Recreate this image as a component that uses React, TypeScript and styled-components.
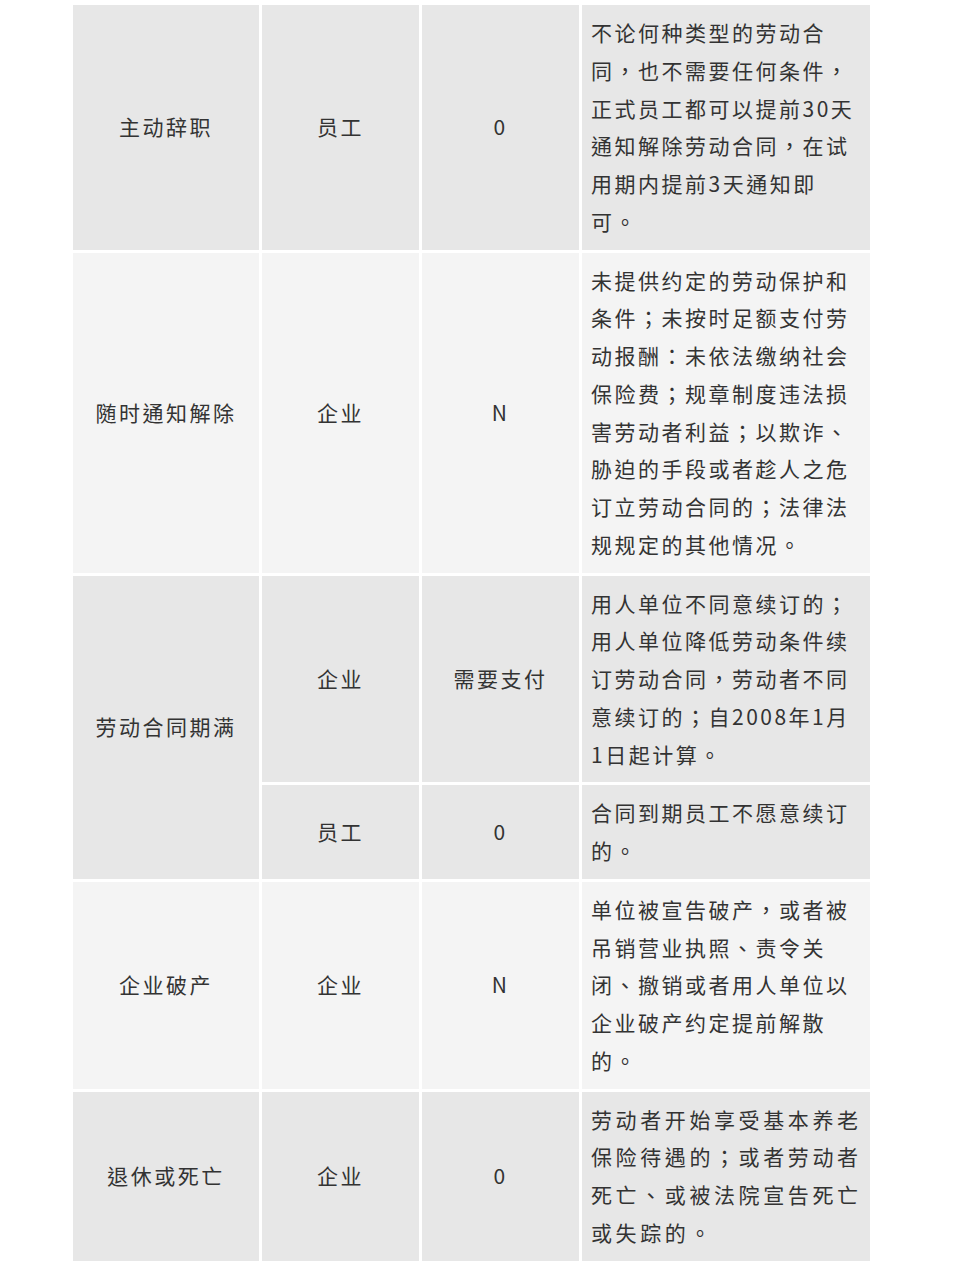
import styled, { createGlobalStyle } from "styled-components";

const GlobalStyle = createGlobalStyle`
  html, body {
    margin: 0;
    padding: 0;
    background: #ffffff;
  }
  body {
    font-family: "Noto Sans CJK TC", "Noto Sans CJK SC", "Noto Sans", sans-serif;
    color: #333333;
  }
`;

type Tone = "dark" | "light";

const rows: {
  tone: Tone;
  reason: string;
  wide?: boolean;
  parts: { who: string; pay: string; notes: string[] }[];
}[] = [
  {
    tone: "dark",
    reason: "主动辞职",
    parts: [
      {
        who: "员工",
        pay: "0",
        notes: [
          "不论何种类型的劳动合",
          "同，也不需要任何条件，",
          "正式员工都可以提前30天",
          "通知解除劳动合同，在试",
          "用期内提前3天通知即",
          "可。",
        ],
      },
    ],
  },
  {
    tone: "light",
    reason: "随时通知解除",
    parts: [
      {
        who: "企业",
        pay: "N",
        notes: [
          "未提供约定的劳动保护和",
          "条件；未按时足额支付劳",
          "动报酬：未依法缴纳社会",
          "保险费；规章制度违法损",
          "害劳动者利益；以欺诈、",
          "胁迫的手段或者趁人之危",
          "订立劳动合同的；法律法",
          "规规定的其他情况。",
        ],
      },
    ],
  },
  {
    tone: "dark",
    reason: "劳动合同期满",
    parts: [
      {
        who: "企业",
        pay: "需要支付",
        notes: [
          "用人单位不同意续订的；",
          "用人单位降低劳动条件续",
          "订劳动合同，劳动者不同",
          "意续订的；自2008年1月",
          "1日起计算。",
        ],
      },
      {
        who: "员工",
        pay: "0",
        notes: ["合同到期员工不愿意续订", "的。"],
      },
    ],
  },
  {
    tone: "light",
    reason: "企业破产",
    parts: [
      {
        who: "企业",
        pay: "N",
        notes: [
          "单位被宣告破产，或者被",
          "吊销营业执照、责令关",
          "闭、撤销或者用人单位以",
          "企业破产约定提前解散",
          "的。",
        ],
      },
    ],
  },
  {
    tone: "dark",
    reason: "退休或死亡",
    wide: true,
    parts: [
      {
        who: "企业",
        pay: "0",
        notes: [
          "劳动者开始享受基本养老",
          "保险待遇的；或者劳动者",
          "死亡、或被法院宣告死亡",
          "或失踪的。",
        ],
      },
    ],
  },
];

export default function App() {
  return (
    <>
      <GlobalStyle />
      <Page>
        <Table>
          <colgroup>
            <Col $w={186} />
            <Col $w={157} />
            <Col $w={157} />
            <Col $w={288} />
          </colgroup>
          <tbody>
            {rows.map((row) =>
              row.parts.map((part, i) => (
                <tr key={row.reason + i}>
                  {i === 0 && (
                    <Cell $tone={row.tone} rowSpan={row.parts.length}>
                      {row.reason}
                    </Cell>
                  )}
                  <Cell $tone={row.tone}>{part.who}</Cell>
                  <Cell $tone={row.tone}>{part.pay}</Cell>
                  <NoteCell $tone={row.tone} $wide={row.wide}>
                    {part.notes.map((line) => (
                      <Line key={line}>{line}</Line>
                    ))}
                  </NoteCell>
                </tr>
              ))
            )}
          </tbody>
        </Table>
      </Page>
    </>
  );
}

const Page = styled.div`
  width: 960px;
  padding: 2px 0 16px 70px;
  box-sizing: border-box;
`;

const Table = styled.table`
  border-collapse: separate;
  border-spacing: 3px;
  table-layout: fixed;
  width: 803px;
  font-size: 21px;
  letter-spacing: 2.5px;
  line-height: 37.75px;
`;

const Col = styled.col<{ $w: number }>`
  width: ${(p) => p.$w}px;
`;

const Cell = styled.td<{ $tone: Tone }>`
  background: ${(p) => (p.$tone === "dark" ? "#e7e7e7" : "#f4f4f4")};
  text-align: center;
  vertical-align: middle;
  padding: 0;
  color: #333333;
`;

const NoteCell = styled(Cell)<{ $wide?: boolean }>`
  text-align: left;
  padding: 9px 0 9px 9px;
  letter-spacing: ${(p) => (p.$wide ? "3.6px" : "2.5px")};
`;

const Line = styled.div`
  white-space: nowrap;
`;
